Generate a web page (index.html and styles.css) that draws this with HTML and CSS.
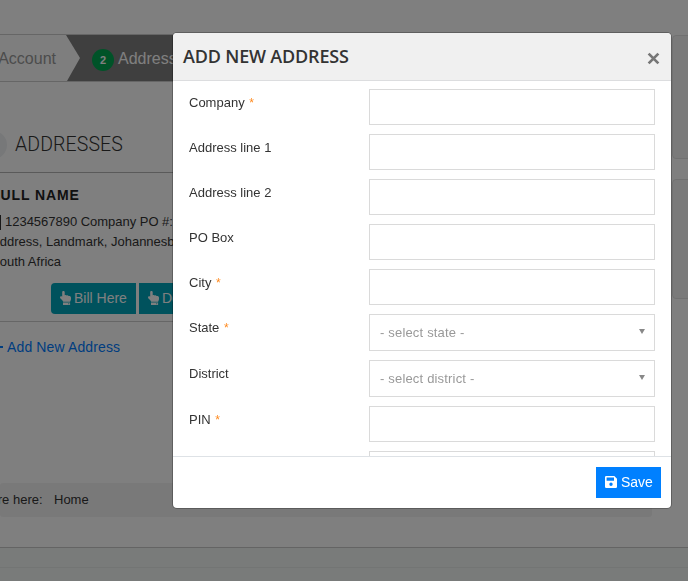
FILE: index.html
```html
<!DOCTYPE html>
<html lang="en">
<head>
<meta charset="utf-8">
<title>Addresses</title>
<link rel="stylesheet" href="styles.css">
</head>
<body>
<svg class="sprite" aria-hidden="true">
  <symbol id="hand" viewBox="0 0 11 14"><path d="M2.200 1.300C2.200.5 2.700 0 3.400 0s1.300.5 1.300 1.300v3c.6-.5 1.600-.4 2 .2.600-.3 1.500-.1 1.900.6 1.300-.3 2.400.4 2.400 1.700v1.200c0 1.200-.7 1.900-.9 2.800H3.200C2.900 9.800 1.400 8.600.5 7.600-.5 6.400.3 5 1.400 5.200l.8.400zM3 11.500h7.100V14H3zm5.300.8v.9h.9v-.9z" fill-rule="evenodd"/></symbol>
</svg>
<div class="page">
  <div class="columns">
    <main class="main">
      <div class="steps">
        <div class="step step-done"><span class="step-account">Account</span></div>
        <div class="step-active"><span class="badge">2</span><span class="step-text">Address</span></div>
      </div>
      <h2 class="section-title"><span class="dot"></span><span class="title-text">ADDRESSES</span></h2>
      <section class="card">
        <h3 class="name">FULL NAME</h3>
        <div class="details">
          <div class="line first"><span class="phone"></span><span>1234567890 Company PO #:</span></div>
          <div class="line second">Address, Landmark, Johannesburg</div>
          <div class="line third">South Africa</div>
        </div>
        <div class="actions">
          <a class="btn btn-info"><svg class="hand"><use href="#hand"/></svg>Bill Here</a>
          <a class="btn btn-info btn-deliver"><svg class="hand"><use href="#hand"/></svg>Deliver Here</a>
        </div>
      </section>
      <a class="add"><span class="plus"></span>Add New Address</a>
      <nav class="crumbs"><span class="here">You are here:</span><span>Home</span></nav>
    </main>
    <aside class="side"><div class="panel"></div><div class="panel panel-small"></div></aside>
  </div>
  <footer class="footer"><div class="footer-top"></div></footer>
</div>
<div class="overlay">
  <div class="modal">
    <header class="modal-head"><h1>ADD NEW ADDRESS</h1><svg class="close" viewBox="0 0 12 12"><path d="M1.500 1.500l9 9M10.500 1.500l-9 9"/></svg></header>
    <form class="modal-body">
      <div class="row"><label>Company <i>*</i></label><div class="field"></div></div>
      <div class="row"><label>Address line 1</label><div class="field"></div></div>
      <div class="row"><label>Address line 2</label><div class="field"></div></div>
      <div class="row"><label>PO Box</label><div class="field"></div></div>
      <div class="row"><label>City <i>*</i></label><div class="field"></div></div>
      <div class="row"><label>State <i>*</i></label><div class="field select"><span>- select state -</span><b></b></div></div>
      <div class="row"><label>District</label><div class="field select"><span>- select district -</span><b></b></div></div>
      <div class="row"><label>PIN <i>*</i></label><div class="field"></div></div>
      <div class="row"><label></label><div class="field"></div></div>
    </form>
    <footer class="modal-foot"><button class="save" type="button"><svg class="disk" viewBox="0 0 12 12"><path fill-rule="evenodd" d="M1.200 0H9.300L12 2.700V10.800Q12 12 10.800 12H1.200Q0 12 0 10.800V1.200Q0 0 1.200 0ZM1.600 1.600V4.800H9V1.600ZM6 6.600a1.700 1.700 0 1 0 0 3.400a1.700 1.700 0 1 0 0-3.400Z"/></svg><span>Save</span></button></footer>
  </div>
</div>
</body>
</html>
```
FILE: styles.css
```css
* { box-sizing: border-box; }
body { margin: 0; background: #fff; color: #333; font: 13px/20px "Liberation Sans", Arial, sans-serif; overflow: hidden; }
.sprite { display: none; }
.page { height: 581px; overflow: hidden; display: flex; flex-direction: column; white-space: nowrap; }
.columns { display: flex; gap: 20px; height: 547px; padding-top: 34px; }
.main { width: 652px; flex: none; display: flex; flex-direction: column; }
.steps { display: flex; height: 48px; border-top: 1px solid #ccc; border-bottom: 1px solid #ccc; background: #7e7e7e; font-size: 16px; line-height: 47px; }
.step { width: 80px; background: #fdfdfd; clip-path: polygon(0 0, 66px 0, 100% 50%, 67px 100%, 0 100%); color: #999; display: flex; justify-content: flex-end; padding-right: 24px; }
.step-active { display: flex; align-items: center; padding-left: 12px; color: #fff; }
.badge { width: 22px; height: 22px; border-radius: 50%; background: #00a651; font: bold 11px/22px "Liberation Sans", sans-serif; text-align: center; margin: 3px 4px 0 0; }
.section-title { display: flex; align-items: center; height: 91px; margin: 0; padding-top: 36px; border-bottom: 1px solid #b5b5b5; font: 300 19.500px/24px Roboto, sans-serif; letter-spacing: .1px; color: #333; }
.dot { width: 28px; height: 28px; border-radius: 50%; background: #eef0f3; margin-left: -21px; }
.title-text { margin: -1px 0 0 8px; }
.card { height: 149px; border-bottom: 1px solid #ccc; }
.name { margin: 12px 0 0 -9px; font-size: 14px; line-height: 20px; letter-spacing: .9px; color: #222; }
.details { margin-top: 7px; }
.line { display: flex; align-items: center; }
.phone { width: 7px; height: 15px; border: 1px solid #333; margin: 0 4px 0 -6px; }
.first { letter-spacing: -.02px; }
.second { margin-left: -9px; }
.third { margin-left: -9px; }
.actions { display: flex; gap: 3px; margin: 11px 0 0 51px; }
.btn { display: flex; align-items: center; height: 31px; padding: 0 9px 1px; font-size: 14px; color: #fff; }
.btn-info { background: #00a5bb; width: 85px; border-radius: 4px 0 0 4px; }
.btn-deliver { width: 120px; border-radius: 0; }
.hand { width: 11px; height: 14px; fill: #fff; margin-right: 3px; flex: none; }
.add { display: flex; align-items: center; margin-top: 15px; font-size: 14px; letter-spacing: .13px; color: #007bff; }
.plus { width: 7px; height: 2px; background: #007bff; margin: 0 4px 0 -4px; }
.crumbs { display: flex; align-items: center; height: 34px; margin-top: 126px; background: #f3f3f3; border-radius: 3px; }
.here { width: 89px; margin-left: -35px; }
.side { width: 120px; flex: none; padding-top: 1px; }
.panel { height: 124px; background: #f5f5f5; border: 1px solid #e3e3e3; border-radius: 4px; margin-bottom: 20px; }
.panel-small { height: 120px; }
.footer { height: 34px; background: #f2f6f4; border-top: 1px solid #c8c8c8; }
.footer-top { height: 20px; border-bottom: 1px solid #e6eae8; }
.overlay { position: fixed; inset: 0; background: rgba(0, 0, 0, .5); padding: 33px 0 0 173px; }
.modal { width: 498px; height: 475px; display: flex; flex-direction: column; background: #fff; border-radius: 4px; overflow: hidden; box-shadow: 0 0 0 1px rgba(0, 0, 0, .25); }
.modal-head { height: 48px; flex: none; display: flex; justify-content: space-between; align-items: center; padding: 0 11px 0 10px; background: #f0f0f0; border-bottom: 1px solid #dcdddf; }
.modal-head h1 { margin: -2px 0 0; font: 600 18px/24px "Open Sans", sans-serif; letter-spacing: -.18px; color: #333; }
.close { width: 13px; height: 13px; fill: none; stroke: #777; stroke-width: 2.5; margin-top: 3px; }
.modal-body { flex: 1; min-height: 0; overflow: hidden; display: flex; flex-direction: column; gap: 9px; padding: 8px 16px 0; }
.row { display: flex; flex: none; }
.row label { width: 180px; padding-top: 4px; }
.row i { color: #ff8a1f; font-size: 12px; font-style: normal; margin-left: 1px; }
.field { width: 286px; height: 36px; border: 1px solid #dadada; background: #fff; }
.select { height: 37px; display: flex; align-items: center; justify-content: space-between; padding: 0 9px 0 10px; color: #999; letter-spacing: .18px; }
.select b { border: 3.5px solid transparent; border-top: 5px solid #888; border-bottom: 0; margin-top: -2px; }
.modal-foot { height: 52px; flex: none; display: flex; justify-content: flex-end; padding: 10px; border-top: 1px solid #dee2e6; }
.save { display: flex; align-items: center; gap: 4px; width: 65px; height: 31px; padding: 0 8px 1px 9px; border: 0; background: #0080ff; color: #fff; font: 14px/20px "Liberation Sans", sans-serif; }
.disk { width: 12px; height: 12px; fill: #fff; flex: none; }
```
